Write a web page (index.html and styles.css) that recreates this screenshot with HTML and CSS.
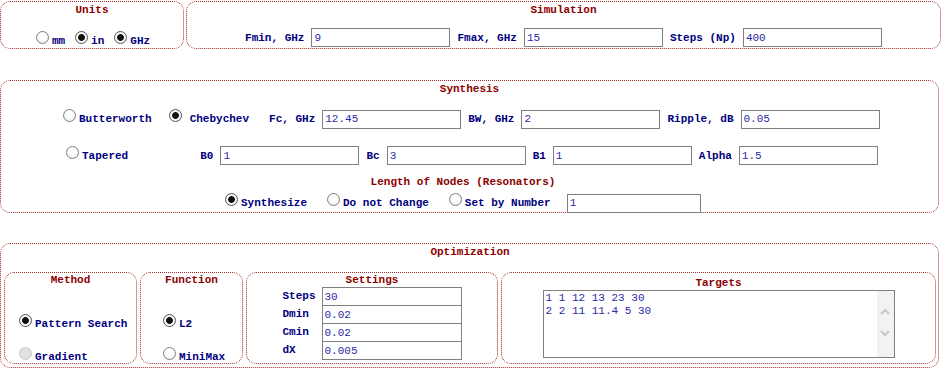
FILE: index.html
```html
<!DOCTYPE html>
<html lang="en">
<head>
  <meta charset="UTF-8">
  <title>Filter Synthesis</title>
  <link rel="stylesheet" href="styles.css">
</head>
<body>
  <div class="top">
    <div class="box units">
      <div class="title">Units</div>
      <div class="units-row">
        <label class="opt"><input type="radio" name="len"><span>mm</span></label>
        <label class="opt"><input type="radio" name="len" checked><span>in</span></label>
        <label class="opt"><input type="radio" name="freq" checked><span>GHz</span></label>
      </div>
    </div>
    <div class="box sim">
      <div class="title">Simulation</div>
      <div class="sim-row">
        <span class="lbl">Fmin, GHz</span><input class="field" type="text" value="9">
        <span class="lbl">Fmax, GHz</span><input class="field" type="text" value="15">
        <span class="lbl">Steps (Np)</span><input class="field" type="text" value="400">
      </div>
    </div>
  </div>

  <div class="box synth">
    <div class="title">Synthesis</div>
    <div class="row row1">
      <label class="opt"><input type="radio" name="type"><span>Butterworth</span></label>
      <label class="opt wide cheb"><input type="radio" name="type" checked><span>Chebychev</span></label>
      <span class="lbl fc">Fc, GHz</span><input class="field" type="text" value="12.45">
      <span class="lbl">BW, GHz</span><input class="field" type="text" value="2">
      <span class="lbl">Ripple, dB</span><input class="field" type="text" value="0.05">
    </div>
    <div class="row row2">
      <label class="opt"><input type="radio" name="type"><span>Tapered</span></label>
      <span class="lbl b0">B0</span><input class="field" type="text" value="1">
      <span class="lbl">Bc</span><input class="field" type="text" value="3">
      <span class="lbl">B1</span><input class="field" type="text" value="1">
      <span class="lbl">Alpha</span><input class="field" type="text" value="1.5">
    </div>
    <div class="nodes">
      <div class="title">Length of Nodes (Resonators)</div>
      <div class="row row3">
        <label class="opt"><input type="radio" name="nodes" checked><span>Synthesize</span></label>
        <label class="opt next"><input type="radio" name="nodes"><span>Do not Change</span></label>
        <label class="opt next"><input type="radio" name="nodes"><span>Set by Number</span></label>
        <input class="field num" type="text" value="1">
      </div>
    </div>
  </div>

  <div class="box optim">
    <div class="title">Optimization</div>
    <div class="panels">
      <div class="box method">
        <div class="title">Method</div>
        <label class="opt first"><input type="radio" name="method" checked><span>Pattern Search</span></label>
        <label class="opt second"><input type="radio" name="method" disabled><span>Gradient</span></label>
      </div>
      <div class="box func">
        <div class="title">Function</div>
        <label class="opt first"><input type="radio" name="func" checked><span>L2</span></label>
        <label class="opt second"><input type="radio" name="func"><span>MiniMax</span></label>
      </div>
      <div class="box settings">
        <div class="title">Settings</div>
        <div class="grid">
          <span class="lbl">Steps</span><input class="field" type="text" value="30">
          <span class="lbl">Dmin</span><input class="field" type="text" value="0.02">
          <span class="lbl">Cmin</span><input class="field" type="text" value="0.02">
          <span class="lbl">dX</span><input class="field" type="text" value="0.005">
        </div>
      </div>
      <div class="box targets">
        <div class="title">Targets</div>
        <div class="area">
          <textarea spellcheck="false">1 1 12 13 23 30
2 2 11 11.4 5 30</textarea>
          <div class="scroll">
            <svg width="10" height="7" viewBox="0 0 10 7"><polyline points="1,6 5,2 9,6" fill="none" stroke="#c6c6c6" stroke-width="2"/></svg>
            <svg width="10" height="7" viewBox="0 0 10 7"><polyline points="1,1 5,5 9,1" fill="none" stroke="#c6c6c6" stroke-width="2"/></svg>
          </div>
        </div>
      </div>
    </div>
  </div>
</body>
</html>
```

FILE: styles.css
```css
body {
  margin: 0;
  padding-top: 1px;
  background: #fff;
  font-family: "Liberation Mono", "Courier New", monospace;
  font-size: 11px;
  line-height: 13px;
  color: #000080;
}
.box {
  box-sizing: border-box;
  border: 1px dotted #a52a2a;
  border-radius: 10px;
}
.title {
  color: #8b0000;
  font-weight: bold;
  text-align: center;
  padding-top: 2px;
}
.lbl,
.opt span {
  font-weight: bold;
  white-space: pre;
}
.field {
  box-sizing: border-box;
  width: 139px;
  height: 19px;
  margin: 0;
  padding: 0 2px;
  border: 1px solid #808080;
  background: #fff;
  font: 11px "Liberation Mono", "Courier New", monospace;
  color: #2a2aa8;
  outline: none;
}

/* radio buttons, old style */
input[type="radio"] {
  -webkit-appearance: none;
  appearance: none;
  box-sizing: border-box;
  width: 13px;
  height: 13px;
  margin: 0;
  border: 1px solid #7f7f7f;
  border-radius: 50%;
  background: radial-gradient(circle at 50% 40%, #fff 0, #fff 35%, #e4e4e4 100%);
}
input[type="radio"]:checked {
  border-color: #555;
  background: radial-gradient(circle, #111 0, #111 3px, #fff 3.8px, #fff 40%, #e4e4e4 100%);
}
input[type="radio"]:disabled {
  border-color: #c9c9c9;
  background: radial-gradient(circle, #e6e6e6 0, #dadada 100%);
}
.opt {
  display: inline-flex;
  align-items: baseline;
  gap: 3px;
}
.opt.wide {
  gap: 8px;
}

/* top row */
.top {
  display: flex;
  gap: 2px;
  width: 941px;
  height: 48px;
}
.units {
  width: 184px;
}
.units-row {
  display: flex;
  align-items: baseline;
  justify-content: center;
  gap: 10px;
  margin-top: 14px;
  padding-left: 2px;
}
.sim {
  flex: 1;
}
.sim-row {
  display: flex;
  align-items: baseline;
  justify-content: center;
  gap: 7px;
  margin-top: 11px;
}

/* synthesis */
.synth {
  width: 939px;
  height: 133px;
  margin-top: 31px;
}
.row {
  display: flex;
  align-items: baseline;
  gap: 7px;
}
.row1 {
  margin-top: 13px;
  padding-left: 62px;
}
.row1 .cheb {
  margin-left: 10px;
}
.row1 .fc {
  margin-left: 13px;
}
.row2 {
  margin-top: 17px;
  padding-left: 65px;
}
.row2 .b0 {
  margin-left: 65px;
}
.nodes {
  width: 476px;
  margin: 11px 0 0 224px;
}
.nodes .title {
  padding-top: 0;
}
.row3 {
  margin-top: 4px;
}
.row3 .next {
  margin-left: 13px;
}
.row3 .num {
  width: 134px;
  margin-left: 9px;
}

/* optimization */
.optim {
  width: 939px;
  height: 125px;
  margin-top: 30px;
  padding: 0 2px 3px 3px;
}
.panels {
  display: flex;
  gap: 3px;
  height: 92px;
  margin-top: 13px;
}
.panels .title {
  padding-top: 1px;
}
.method,
.func {
  display: flex;
  flex-direction: column;
  align-items: flex-start;
}
.method {
  width: 133px;
  padding-left: 14px;
}
.func {
  width: 103px;
  padding-left: 22px;
}
.method .title,
.func .title {
  align-self: stretch;
  margin-left: -14px;
}
.func .title {
  margin-left: -22px;
}
.opt.first {
  margin-top: 27px;
}
.opt.second {
  margin-top: 16px;
}
.settings {
  width: 252px;
}
.grid {
  display: grid;
  grid-template-columns: 39px 140px;
  grid-auto-rows: 18px;
  justify-content: center;
  align-items: center;
  margin-top: 0;
}
.grid .field {
  width: 140px;
  align-self: start;
}
.targets {
  flex: 1;
  padding-top: 3px;
}
.area {
  display: flex;
  box-sizing: border-box;
  width: 352px;
  height: 68px;
  margin: 0 auto;
  border: 1px solid #808080;
  background: #fff;
}
.area textarea {
  flex: 1;
  margin: 0;
  padding: 1px 2px;
  border: none;
  resize: none;
  outline: none;
  overflow: hidden;
  font: 11px/13px "Liberation Mono", "Courier New", monospace;
  color: #2a2aa8;
}
.scroll {
  display: flex;
  flex-direction: column;
  align-items: center;
  gap: 15px;
  width: 17px;
  padding-top: 17px;
  background: #f2f2f2;
}
```
